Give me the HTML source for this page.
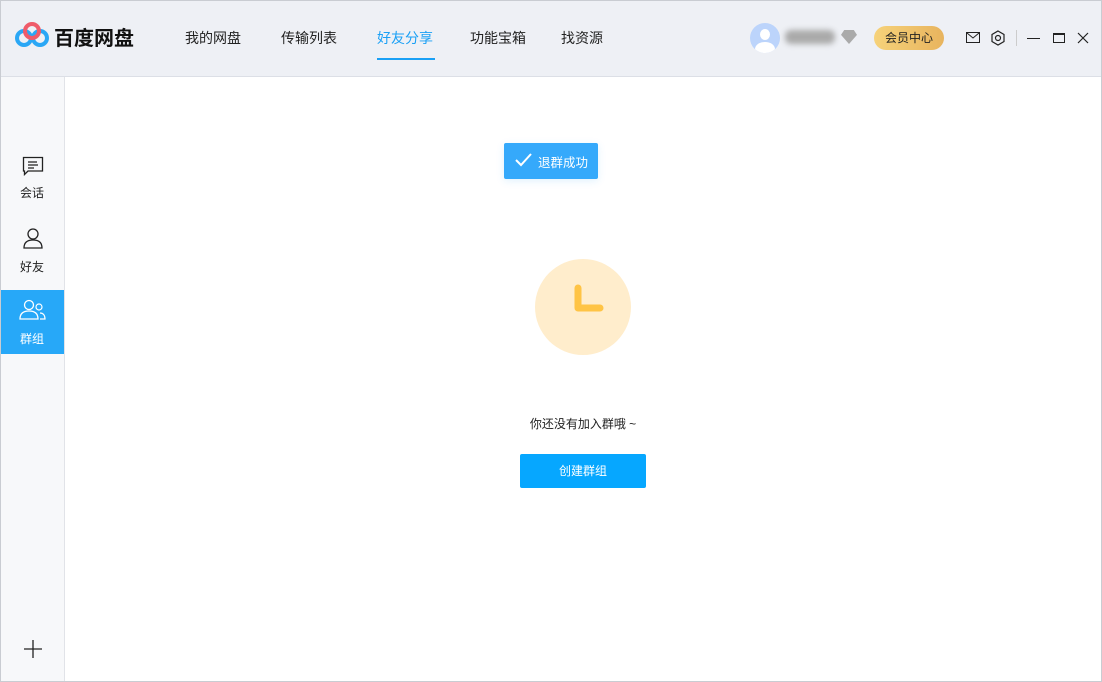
<!DOCTYPE html>
<html><head><meta charset="utf-8"><style>
*{margin:0;padding:0;box-sizing:border-box}
body{width:1102px;height:682px;overflow:hidden;background:#fff;font-family:"Liberation Sans","Noto Sans CJK SC",sans-serif;position:relative}
.frame{position:absolute;left:0;top:0;width:1102px;height:682px;border:1px solid #c9ccd2;pointer-events:none;z-index:5}
.top{position:absolute;left:0;top:0;width:1102px;height:77px;background:#eef0f5;border-bottom:1px solid #dcdfe6}
.nav{position:absolute;top:28px;font-size:14px;color:#222}
.side{position:absolute;left:0;top:77px;width:65px;height:605px;background:#f7f8fa;border-right:1px solid #e1e3e8}
.si{position:absolute;left:0;width:64px;text-align:center;font-size:12px;color:#222}
</style></head><body>
<div class="top">
 <svg style="position:absolute;left:15px;top:21px" width="35" height="28" viewBox="0 0 35 28">
  <circle cx="9" cy="17" r="7" fill="none" stroke="#2aa7f5" stroke-width="4"/>
  <circle cx="25" cy="17" r="7" fill="none" stroke="#2aa7f5" stroke-width="4"/>
  <circle cx="17" cy="10" r="7" fill="none" stroke="#ef5b6a" stroke-width="4"/>
 </svg>
 <div style="position:absolute;left:54px;top:22px;font-size:20px;font-weight:bold;color:#111">百度网盘</div>
 <div class="nav" style="left:185px">我的网盘</div>
 <div class="nav" style="left:281px">传输列表</div>
 <div class="nav" style="left:377px;color:#1aa0f5">好友分享</div>
 <div style="position:absolute;left:377px;top:58px;width:58px;height:2px;background:#1aa0f5"></div>
 <div class="nav" style="left:470px">功能宝箱</div>
 <div class="nav" style="left:561px">找资源</div>
 <div style="position:absolute;left:750px;top:23px;width:30px;height:30px;border-radius:50%;background:#bcd4fb;overflow:hidden"><div style="position:absolute;left:10px;top:6px;width:10px;height:11px;border-radius:50%;background:#fff"></div><div style="position:absolute;left:5px;top:19px;width:20px;height:14px;border-radius:50%;background:#fff"></div></div>
 <div style="position:absolute;left:785px;top:30px;width:50px;height:14px;background:#aaa;border-radius:6px;filter:blur(3px)"></div>
 <div style="position:absolute;left:841px;top:30px;width:16px;height:14px;background:#aaa;clip-path:polygon(20% 0,80% 0,100% 35%,50% 100%,0 35%)"></div>
 <div style="position:absolute;left:874px;top:26px;width:70px;height:24px;border-radius:12px;background:linear-gradient(90deg,#f6d27a,#e8b45e);font-size:12px;line-height:24px;text-align:center;color:#222">会员中心</div>
 <svg style="position:absolute;left:966px;top:32px" width="14" height="11"><rect x="0.5" y="0.5" width="13" height="10" fill="none" stroke="#222"/><path d="M1 1L7 6L13 1" fill="none" stroke="#222"/></svg>
 <svg style="position:absolute;left:990px;top:30px" width="16" height="16"><path d="M8 1L14 4.5V11.5L8 15L2 11.5V4.5Z" fill="none" stroke="#222" stroke-width="1.2"/><circle cx="8" cy="8" r="2.5" fill="none" stroke="#222" stroke-width="1.2"/></svg>
 <div style="position:absolute;left:1016px;top:30px;width:1px;height:16px;background:#ccc"></div>
 <div style="position:absolute;left:1027px;top:38px;width:13px;height:1px;background:#222"></div>
 <div style="position:absolute;left:1053px;top:33px;width:12px;height:10px;border:1px solid #222;border-top-width:2px"></div>
 <svg style="position:absolute;left:1077px;top:32px" width="12" height="12"><path d="M1 1L11 11M11 1L1 11" stroke="#222" stroke-width="1.2"/></svg>
</div>
<div class="side">
 <svg style="position:absolute;left:22px;top:79px" width="22" height="20"><path d="M1.5 1.5H20.5V15H6L2.5 18.5V15H1.5Z" fill="none" stroke="#222" stroke-width="1.3"/><path d="M6 6H15M6 9H16M6 12H12" stroke="#222" stroke-width="1.2"/></svg>
 <div class="si" style="top:107px">会话</div>
 <svg style="position:absolute;left:22px;top:150px" width="22" height="22"><circle cx="11" cy="7" r="5" fill="none" stroke="#222" stroke-width="1.3"/><path d="M2 21C2 15 6 13 11 13S20 15 20 21Z" fill="none" stroke="#222" stroke-width="1.3"/></svg>
 <div class="si" style="top:181px">好友</div>
 <div style="position:absolute;left:0;top:213px;width:64px;height:64px;background:#27a8f8"></div>
 <svg style="position:absolute;left:19px;top:222px" width="28" height="22"><circle cx="10" cy="6" r="4.5" fill="none" stroke="#fff" stroke-width="1.3"/><path d="M1 20C1 14 5 12 10 12S19 14 19 20Z" fill="none" stroke="#fff" stroke-width="1.3"/><circle cx="20" cy="8" r="3" fill="none" stroke="#fff" stroke-width="1.2"/><path d="M21 14C24 14 26 16 26 20H21" fill="none" stroke="#fff" stroke-width="1.2"/></svg>
 <div class="si" style="top:253px;color:#fff">群组</div>
 <svg style="position:absolute;left:23px;top:562px" width="20" height="20"><path d="M10 1V19M1 10H19" stroke="#222" stroke-width="1.3"/></svg>
</div>
<div style="position:absolute;left:504px;top:143px;width:94px;height:36px;background:#35a9fb;border-radius:2px;box-shadow:0 2px 8px rgba(53,169,251,.15)"></div>
<svg style="position:absolute;left:515px;top:152px" width="18" height="16"><path d="M1 8L6 13L16 2" fill="none" stroke="#fff" stroke-width="2"/></svg>
<div style="position:absolute;left:538px;top:152px;font-size:12.5px;color:#fff">退群成功</div>
<div style="position:absolute;left:535px;top:259px;width:96px;height:96px;border-radius:50%;background:#ffedcc"></div>
<svg style="position:absolute;left:573px;top:283px" width="34" height="32"><path d="M5 5V25H27" fill="none" stroke="#ffc445" stroke-width="7" stroke-linecap="round" stroke-linejoin="round"/></svg>
<div style="position:absolute;left:0;width:1166px;top:415px;text-align:center;font-size:12px;color:#222">你还没有加入群哦 ~</div>
<div style="position:absolute;left:520px;top:454px;width:126px;height:34px;background:#06a7ff;border-radius:2px;color:#fff;font-size:12px;line-height:34px;text-align:center">创建群组</div>
<div class="frame"></div>
</body></html>
